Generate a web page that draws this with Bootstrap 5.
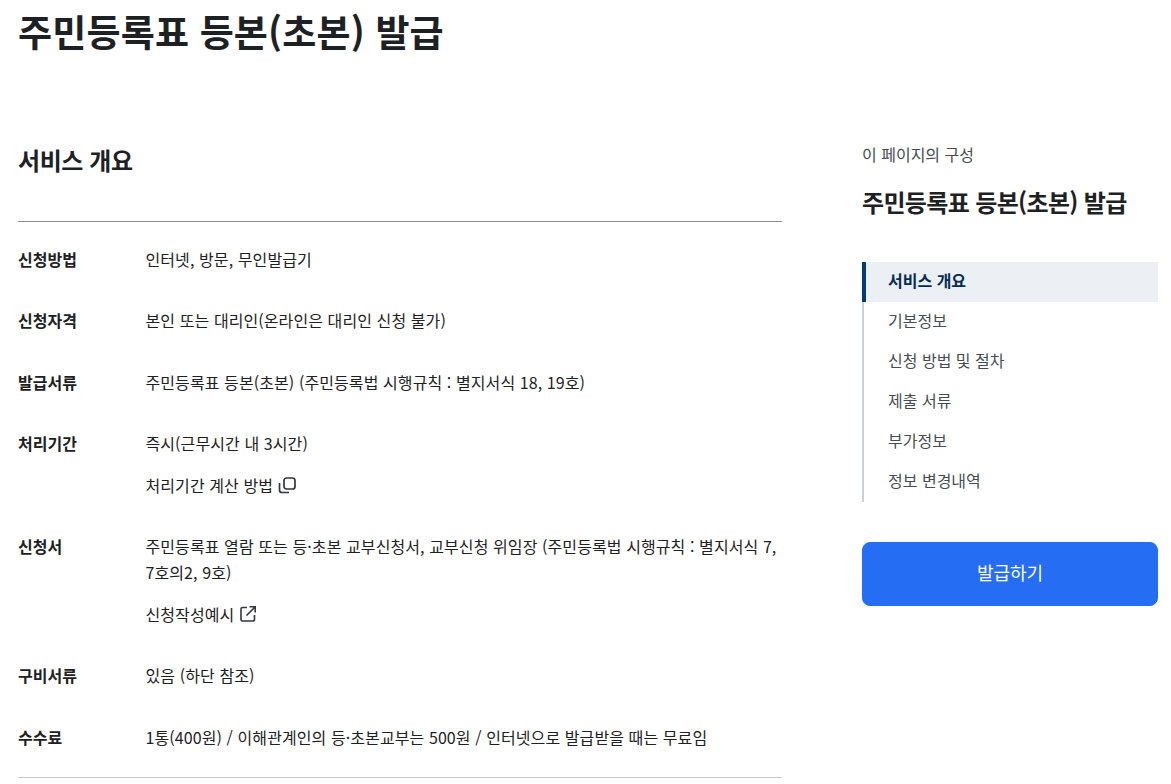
<!DOCTYPE html>
<html lang="ko">
<head>
  <meta charset="UTF-8">
  <meta name="viewport" content="width=device-width, initial-scale=1.0">
  <title>주민등록표 등본(초본) 발급</title>
  <link href="https://cdn.jsdelivr.net/npm/bootstrap@5.3.0/dist/css/bootstrap.min.css" rel="stylesheet">
  <style>
    body {
      font-family: "Noto Sans CJK KR", "Noto Sans", sans-serif;
      color: #1e2124;
      background: #fff;
      height: 784px;
      overflow: hidden;
    }
    .page-wrap {
      padding: 0 13px 0 18px;
    }
    .page-title {
      font-size: 37px;
      line-height: 46px;
      font-weight: 700;
      letter-spacing: 0.18px;
      margin: 8px 0 0;
      height: 136px;
    }
    .main-col {
      width: 764px;
    }
    .side-col {
      width: 296px;
    }
    .section-title {
      font-size: 24px;
      line-height: 32px;
      font-weight: 700;
      letter-spacing: -0.4px;
      margin: 0;
      padding-bottom: 45px;
      border-bottom: 1px solid #8c8c8c;
    }
    .info-list {
      margin: 0;
      padding: 24px 0 27px;
      border-bottom: 1px solid #c6c6c6;
      font-size: 16px;
      line-height: 26.4px;
      letter-spacing: 0.09px;
    }
    .info-row {
      display: flex;
      margin-bottom: 35px;
    }
    .info-row:last-child {
      margin-bottom: 0;
    }
    .info-row dt {
      width: 127.5px;
      flex-shrink: 0;
      font-weight: 700;
      letter-spacing: 0;
    }
    .info-row dd {
      margin: 0;
      flex: 1;
    }
    .info-link {
      color: #1e2124;
      text-decoration: none;
      display: inline-flex;
      align-items: center;
      gap: 5px;
      margin-top: 15px;
    }
    .side-label {
      font-size: 16px;
      line-height: 20px;
      color: #464c53;
      margin: 0;
    }
    .side-title {
      font-size: 24px;
      line-height: 34px;
      font-weight: 700;
      letter-spacing: -0.65px;
      margin: 21px 0 43px;
    }
    .toc-list {
      border-left: 2px solid #cdd1d5;
    }
    .toc-list a {
      display: block;
      height: 40px;
      line-height: 36px;
      padding-left: 24px;
      font-size: 16px;
      color: #464c53;
      text-decoration: none;
    }
    .toc-list a.on {
      margin-left: -2px;
      padding-left: 22px;
      border-left: 4px solid #063a74;
      background: #eceff3;
      color: #052b57;
      font-weight: 700;
    }
    .issue-btn {
      margin-top: 40px;
      height: 64px;
      padding: 4px 12px 8px;
      font-size: 18px;
      border-radius: 8px;
      background: #256ef4;
      border-color: #256ef4;
    }
  </style>
</head>
<body>
  <div class="page-wrap">
    <h1 class="page-title">주민등록표 등본(초본) 발급</h1>
    <div class="d-flex justify-content-between">
      <div class="main-col">
        <h2 class="section-title">서비스 개요</h2>
        <dl class="info-list">
          <div class="info-row"><dt>신청방법</dt><dd>인터넷, 방문, 무인발급기</dd></div>
          <div class="info-row"><dt>신청자격</dt><dd>본인 또는 대리인(온라인은 대리인 신청 불가)</dd></div>
          <div class="info-row"><dt>발급서류</dt><dd>주민등록표 등본(초본) (주민등록법 시행규칙 : 별지서식 18, 19호)</dd></div>
          <div class="info-row">
            <dt>처리기간</dt>
            <dd>
              <div>즉시(근무시간 내 3시간)</div>
              <a class="info-link" href="#">처리기간 계산 방법
                <svg width="18" height="18" viewBox="0 0 18 18" fill="none" stroke="#33363d" stroke-width="1.7"><rect x="6" y="2" width="11" height="11" rx="2.500"/><path d="M1.500 7v7a2.500 2.500 0 0 0 2.500 2.500h7"/></svg>
              </a>
            </dd>
          </div>
          <div class="info-row">
            <dt>신청서</dt>
            <dd>
              <div>주민등록표 열람 또는 등·초본 교부신청서, 교부신청 위임장 (주민등록법 시행규칙 : 별지서식 7, 7호의2, 9호)</div>
              <a class="info-link" href="#">신청작성예시
                <svg width="18" height="18" viewBox="0 0 18 18" fill="none" stroke="#33363d" stroke-width="1.6"><path d="M8 2.500H3.500a1.500 1.500 0 0 0-1.500 1.500v10.500a1.500 1.500 0 0 0 1.500 1.500H14a1.500 1.500 0 0 0 1.500-1.500V10"/><path d="M7.500 10.500 16 2M10.500 1.800h5.700v5.700"/></svg>
              </a>
            </dd>
          </div>
          <div class="info-row"><dt>구비서류</dt><dd>있음 (하단 참조)</dd></div>
          <div class="info-row"><dt>수수료</dt><dd>1통(400원) / 이해관계인의 등·초본교부는 500원 / 인터넷으로 발급받을 때는 무료임</dd></div>
        </dl>
      </div>
      <aside class="side-col">
        <p class="side-label">이 페이지의 구성</p>
        <p class="side-title">주민등록표 등본(초본) 발급</p>
        <nav class="toc-list">
          <a class="on" href="#">서비스 개요</a>
          <a href="#">기본정보</a>
          <a href="#">신청 방법 및 절차</a>
          <a href="#">제출 서류</a>
          <a href="#">부가정보</a>
          <a href="#">정보 변경내역</a>
        </nav>
        <button type="button" class="btn btn-primary w-100 issue-btn">발급하기</button>
      </aside>
    </div>
  </div>
  <script src="https://cdn.jsdelivr.net/npm/bootstrap@5.3.0/dist/js/bootstrap.bundle.min.js"></script>
</body>
</html>
